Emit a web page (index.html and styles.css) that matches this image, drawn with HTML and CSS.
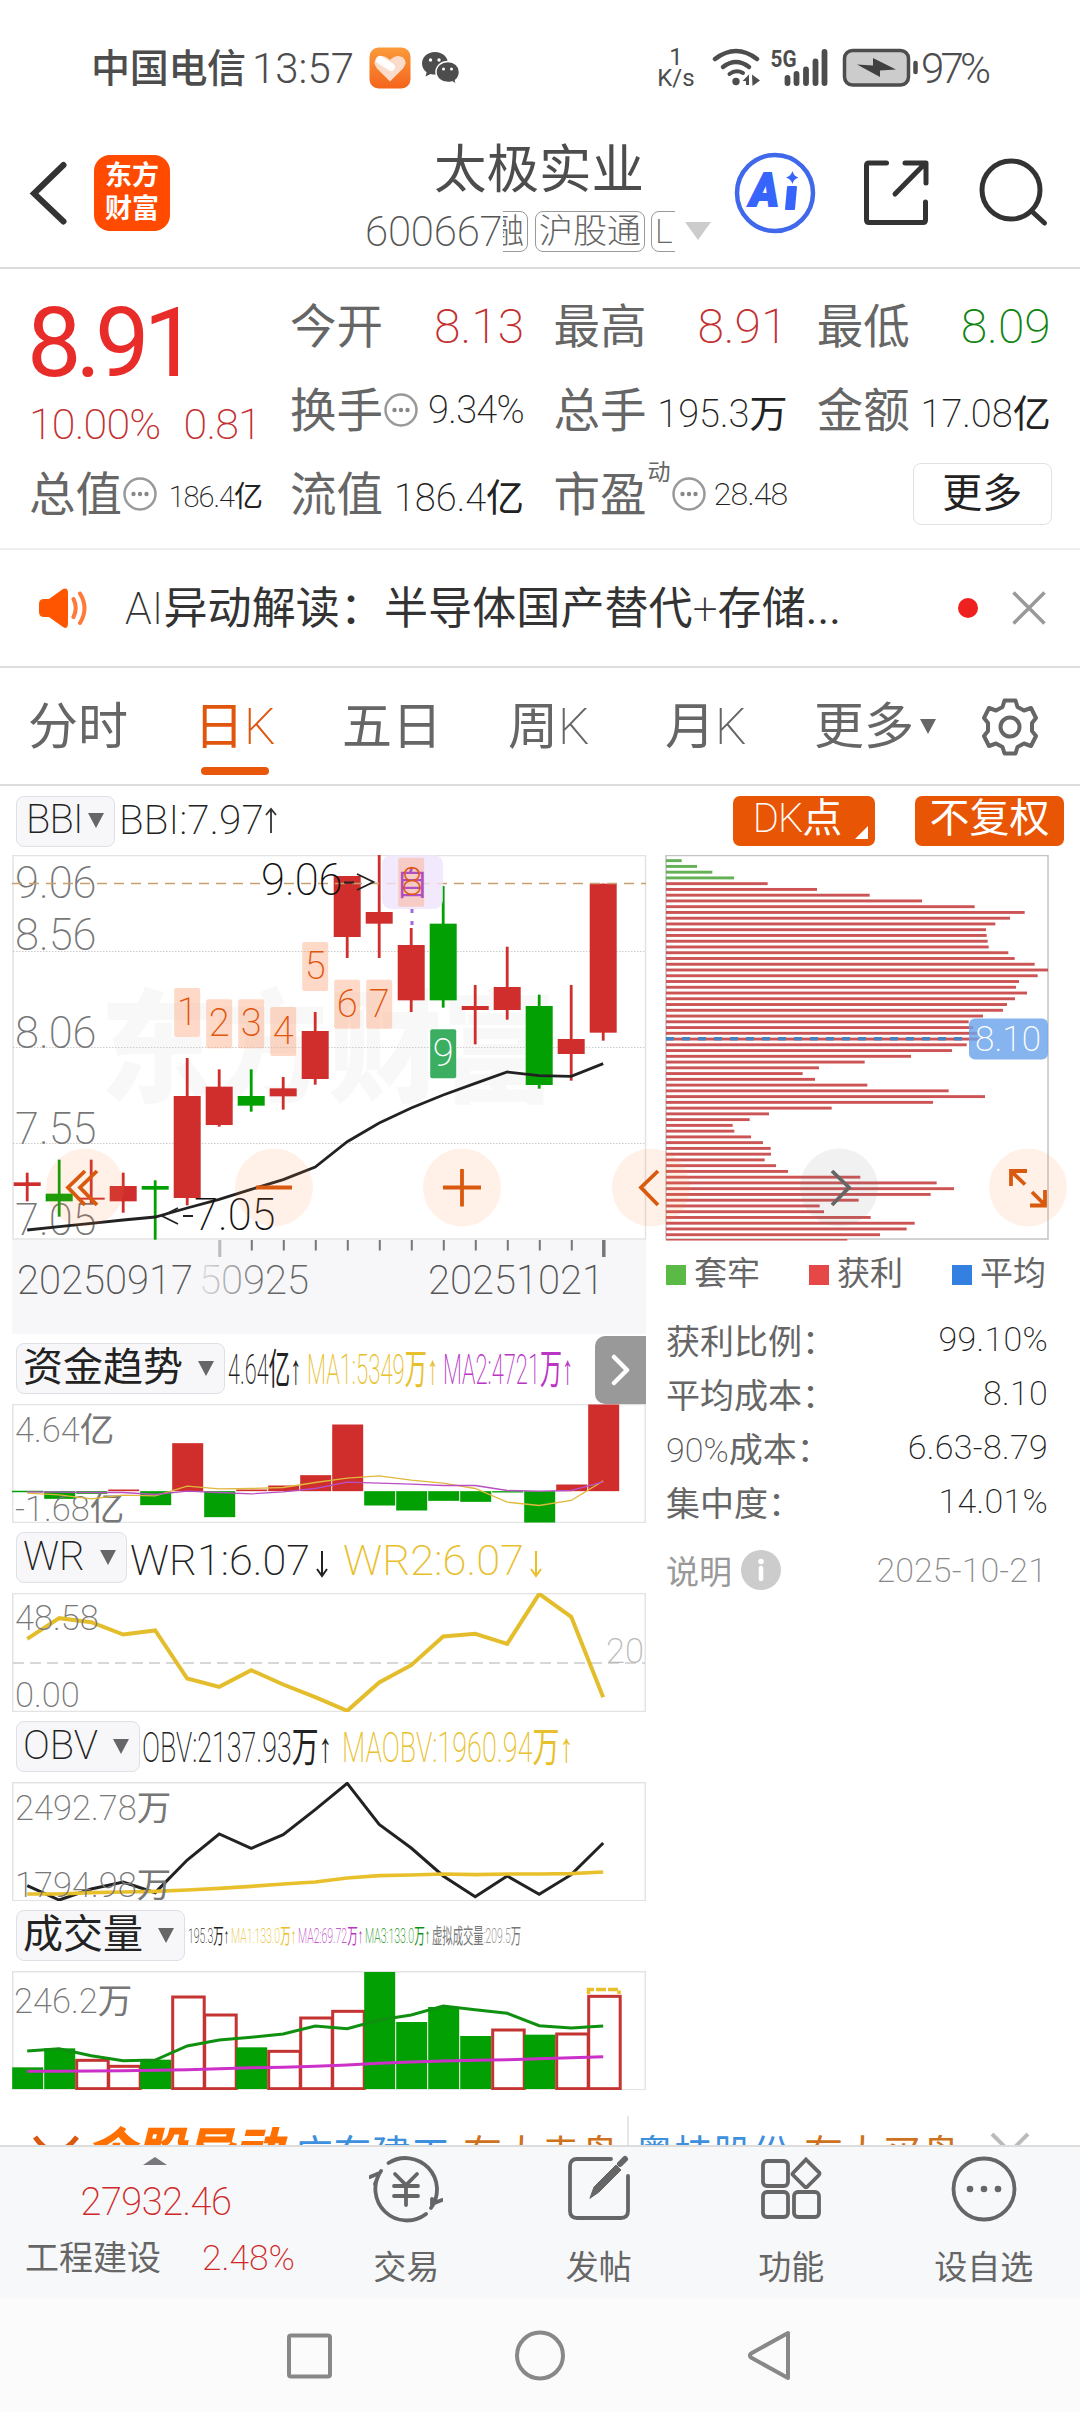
FILE: index.html
```html
<!DOCTYPE html>
<html lang="zh-CN">
<head>
<meta charset="utf-8">
<title>太极实业 600667</title>
<link rel="stylesheet" href="styles.css">
</head>
<body>
<div class="phone">

  <div class="status">
    <span class="carrier">中国电信</span><span class="clock">13:57</span>
    <svg class="heart" width="42" height="42" viewBox="0 0 42 42"><defs><linearGradient id="hg" x1="0" y1="0" x2="0" y2="1"><stop offset="0" stop-color="#fb9a3b"/><stop offset="1" stop-color="#f4641c"/></linearGradient></defs><rect x=".5" y=".5" width="41" height="41" rx="9" fill="url(#hg)"/><path d="M21 34.500L8 21.500Q3 15 8 10.500Q14 6.500 21 13Q28 6.500 34 10.500Q39 15 34 21.500Z" fill="#fbdccb"/><path d="M11 13L22 20" stroke="#fff" stroke-width="8" stroke-linecap="round"/></svg>
    <svg class="wechat" width="40" height="34" viewBox="0 0 40 34" fill="#4d4d4d"><path d="M14 1C6.500 1 1 6 1 12.500c0 3.700 1.800 6.600 4.600 8.700L4.500 25.500l5-2.500c1.500.4 3 .6 4.500.6 7.500 0 13-5 13-11.200S21.500 1 14 1z"/><path d="M27 10.500c-6.800 0-12 4.600-12 10.500s5.200 10.500 12 10.500c1.400 0 2.800-.2 4-.6l4.500 2.400-1-4c2.600-2 4-4.800 4-8.300 0-5.900-5-10.500-11.500-10.500z" stroke="#fff" stroke-width="1.500"/><g fill="#fff"><circle cx="9.500" cy="9" r="1.700"/><circle cx="18" cy="9" r="1.700"/><circle cx="22.500" cy="18" r="1.500"/><circle cx="30.500" cy="18" r="1.500"/></g></svg>
    <span class="rate"><b>1</b><b>K/s</b></span>
    <svg class="signal" width="206" height="44" viewBox="712 46 206 44">
      <g fill="none" stroke="#4d4d4d" stroke-linecap="round"><path d="M715 59Q736 43 757 59" stroke-width="4.500"/><path d="M723 67Q736 57 749 67" stroke-width="4.500"/><path d="M729.500 74Q736 69 743 73" stroke-width="4"/></g>
      <circle cx="736" cy="81.500" r="3.700" fill="#4d4d4d"/><path d="M742.500 81L749 74.500V85H746V81zM752 74.500L760 80.500L752.500 86z" fill="#4d4d4d"/>
      <text x="770.500" y="67" font-size="24.500" font-weight="700" textLength="26" lengthAdjust="spacingAndGlyphs" fill="#4d4d4d">5G</text>
      <g stroke="#4d4d4d" stroke-width="5.800" stroke-linecap="round"><path d="M787.500 78V83M796.500 74V83M806 69.500V83M815.500 61.500V83M824.500 52V83"/></g>
      <rect x="844.500" y="50.500" width="64" height="34.500" rx="8" fill="#ccc" stroke="#4d4d4d" stroke-width="3.500"/><path d="M857 64.500L873 65.500V58L896 69.500L880 70.500V77Z" fill="#404040"/><path d="M915.500 63V72" stroke="#4d4d4d" stroke-width="4.500" stroke-linecap="round"/>
    </svg>
    <span class="pct">97%</span>
  </div>

  <header class="head">
    <svg class="back" width="40" height="66" viewBox="28 160 40 66"><path d="M63.500 165L34 193.500L63.500 221.500" fill="none" stroke="#333" stroke-width="6" stroke-linecap="round"/></svg>
    <div class="logo"><span>东方</span><span>财富</span></div>
    <div class="title">
      <h1>太极实业</h1>
      <div class="sub"><span class="code">600667</span><span class="tags"><i class="cut">融</i><i>沪股通</i><i class="last">L1</i></span><svg class="drop" width="26" height="18" viewBox="0 0 26 18"><path d="M0 0H26L13 18Z" fill="#ccc"/></svg></div>
    </div>
    <svg class="actions" width="330" height="90" viewBox="730 148 330 90" fill="none">
      <circle cx="775" cy="193" r="38" stroke="#3f68ea" stroke-width="4.500"/>
      <text x="750" y="206" font-size="46" font-weight="900" font-style="italic" fill="#3765fc" stroke="#3765fc" stroke-width="2" textLength="29" lengthAdjust="spacingAndGlyphs">A</text>
      <path d="M788 187H796L794 209H786Z" fill="#3765fc" stroke="#3765fc" stroke-width="2" stroke-linejoin="round"/><path d="M792.500 171Q793.500 176 798.500 177.500Q793.500 179 792.500 184Q791 179 786 177.500Q791 176 792.500 171Z" fill="#3765fc"/>
      <g stroke="#333" stroke-width="5" stroke-linecap="round" stroke-linejoin="round"><path d="M886.500 163H869Q866.500 163 866.500 165.500V220Q866.500 222.500 869 222.500H923Q925.500 222.500 925.500 220V202M905 163H926V183M925 163.500L895 194"/><circle cx="1011" cy="190" r="29"/><path d="M1031.500 211L1044.500 223"/></g>
    </svg>
  </header>

  <section class="quote">
    <div class="price">
      <strong>8.91</strong>
      <div class="chg"><span>10.00%</span><span>0.81</span></div>
      <div class="cell"><label>总值</label><svg class="dots" viewBox="0 0 34 34"><use href="#dots"/></svg><em class="xs">186.4<u>亿</u></em></div>
    </div>
    <div class="grid">
      <div class="cell"><label>今开</label><em class="big red">8.13</em></div>
      <div class="cell"><label>最高</label><em class="big red">8.91</em></div>
      <div class="cell"><label>最低</label><em class="big green">8.09</em></div>
      <div class="cell"><label>换手</label><svg class="dots" viewBox="0 0 34 34"><use href="#dots"/></svg><em class="pc">9.34%</em></div>
      <div class="cell"><label>总手</label><em>195.3<u>万</u></em></div>
      <div class="cell"><label>金额</label><em>17.08<u>亿</u></em></div>
      <div class="cell"><label>流值</label><em>186.4<u>亿</u></em></div>
      <div class="cell"><label>市盈</label><sup>动</sup><svg class="dots" viewBox="0 0 34 34"><use href="#dots"/></svg><em class="sm">28.48</em></div>
      <div class="cell"><button class="more">更多</button></div>
    </div>
    <svg width="0" height="0" class="defs"><g id="dots"><circle cx="17" cy="17" r="15.500" fill="none" stroke="#999" stroke-width="2.500"/><g fill="#888"><circle cx="10.500" cy="17" r="2.200"/><circle cx="17" cy="17" r="2.200"/><circle cx="23.500" cy="17" r="2.200"/></g></g></svg>
  </section>

  <section class="news">
    <svg width="50" height="42" viewBox="38 586 50 42"><path d="M39 603Q39 598 44 598H49L63 588Q68 586 68 592V622Q68 629 63 626L49 616H44Q39 616 39 611Z" fill="#ff5500"/><path d="M73.500 598Q78 607 73.500 616M80 592.500Q89 607 80 622" fill="none" stroke="#ff7a38" stroke-width="4" stroke-linecap="round"/></svg>
    <span class="text">AI<u>异动解读：半导体国产替代</u>+<u>存储...</u></span>
    <i class="dot"></i>
    <svg width="34" height="34" viewBox="0 0 34 34"><path d="M1.500 1.500L32.500 32.500M32.500 1.500L1.500 32.500" stroke="#999" stroke-width="3.500"/></svg>
  </section>

  <nav class="tabs">
    <span><u>分时</u></span><span class="on"><u>日</u>K</span><span><u>五日</u></span><span><u>周</u>K</span><span><u>月</u>K</span><span class="tri"><u>更多</u></span>
    <svg width="58" height="58" viewBox="-29 -29 58 58" fill="none" stroke="#666" stroke-width="4" stroke-linejoin="round"><path d="M-5.500 -26.500H5.500L7.500 -20L14 -16.500L21 -19L26 -9L22 -4V4L26 9L21 19L14 16.500L7.500 20L5.500 26.500H-5.500L-7.500 20L-14 16.500L-21 19L-26 9L-22 4V-4L-26 -9L-21 -19L-14 -16.500L-7.500 -20Z"/><circle r="9.500"/></svg>
  </nav>

  <div class="indrow">
    <button class="pill bbi">BBI</button><span class="bbival">BBI:7.97<svg width="14" height="26" viewBox="0 0 14 26"><path d="M7 26V2M2 8L7 2L12 8" fill="none" stroke="#333" stroke-width="1.800"/></svg></span>
    <button class="tag dk">DK<u>点</u></button><button class="tag fq"><u>不复权</u></button>
  </div>

  <main class="charts">
    <div class="left">
      <svg class="kline" width="640" height="479" viewBox="12 15 640 479" id="kline">
        <rect x="12" y="400" width="634" height="95" fill="#f7f7fa"/>
        <text class="mark" x="100" y="252" textLength="456" lengthAdjust="spacingAndGlyphs">东方财富</text>
        <rect x="13" y="15.500" width="632.500" height="383.500" fill="none" stroke="#e3e3e3" stroke-width="1.500"/>
        <path d="M13 111.500H645M13 207.500H645M13 303.500H645" stroke="#ccc" stroke-dasharray="1.500 1.500"/>
        <g class="axis" font-size="43.500"><text x="15" y="57.500">9.06</text><text x="15" y="110">8.56</text><text x="15" y="207.500">8.06</text><text x="15" y="303.500">7.55</text><text x="15" y="395">7.05</text></g>
        <g id="candles"></g>
        <path d="M12 43.500H646" stroke="#c8a070" stroke-width="1.300" stroke-dasharray="10 7"/>
        <rect x="382" y="15" width="61" height="54" rx="9" fill="#f0e4fd" opacity=".8"/>
        <path d="M412 69V88" stroke="#a268e0" stroke-width="3" stroke-dasharray="4 8"/>
        <g id="tags"></g>
        <text x="395.500" y="54.500" font-size="33" font-weight="400" fill="#b050c0">自</text>
        <text x="412" y="54.500" font-size="38" text-anchor="middle" fill="#e0560c">8</text>
        <g class="ext" font-size="43.500"><text x="261" y="55">9.06</text><text x="194" y="389.500">7.05</text></g>
        <path d="M344 42.500H354M357 34L373.500 42L357 50M193 376H183M178 368L162 376L178 384" fill="none" stroke="#222" stroke-width="1.800"/>
        <g stroke="#777" stroke-width="2"><path d="M251.800 400V410.500M283.800 400V410.500M315.800 400V410.500M347.800 400V410.500M379.800 400V410.500M411.800 400V410.500M443.800 400V410.500M475.800 400V410.500M507.800 400V410.500M539.800 400V410.500M571.800 400V410.500"/><path d="M219.800 400V417" stroke="#bbb" stroke-width="3"/><path d="M603.800 400V417" stroke="#777" stroke-width="3.500"/></g>
        <defs><linearGradient id="fade" gradientUnits="userSpaceOnUse" x1="195" y1="0" x2="265" y2="0"><stop offset="0" stop-color="#666" stop-opacity=".1"/><stop offset="1" stop-color="#666"/></linearGradient></defs>
        <g class="dates" font-size="40"><text x="17" y="453.500">20250917</text><text x="199" y="453.500" fill="url(#fade)">50925</text><text x="428" y="453.500">20251021</text></g>
      </svg>

      <div class="subhead">
        <button class="pill" style="width:209px"><u>资金趋势</u></button>
        <svg width="350" height="60" viewBox="228 0 350 60" font-size="42"><text x="228" y="45" textLength="73" lengthAdjust="spacingAndGlyphs" fill="#222">4.64<tspan>亿</tspan>↑</text><text x="307" y="45" textLength="131" lengthAdjust="spacingAndGlyphs" fill="#e8c02c">MA1:5349<tspan>万</tspan>↑</text><text x="443" y="45" textLength="130" lengthAdjust="spacingAndGlyphs" fill="#b935c4">MA2:4721<tspan>万</tspan>↑</text></svg>
        <span class="next"><svg width="20" height="32" viewBox="0 0 20 32"><path d="M3 3L16 16L3 29" fill="none" stroke="#fff" stroke-width="4.500" stroke-linecap="round" stroke-linejoin="round"/></svg></span>
      </div>
      <svg class="panel" viewBox="12 73.500 634 119.500" id="fund"></svg>

      <div class="subhead">
        <button class="pill" style="width:111px">WR</button>
        <svg width="420" height="60" viewBox="130 0 420 60" font-size="43"><text x="130" y="46.500" textLength="180" lengthAdjust="spacingAndGlyphs" fill="#222">WR1:6.07</text><text x="343" y="46.500" textLength="181" lengthAdjust="spacingAndGlyphs" fill="#e8c02c">WR2:6.07</text><g fill="none" stroke-width="2"><path d="M322 23V48M317 41L322 48L327 41" stroke="#222"/><path d="M536 23V48M531 41L536 48L541 41" stroke="#e8c02c"/></g></svg>
      </div>
      <svg class="panel" viewBox="12 262.500 634 119.500" id="wr"></svg>

      <div class="subhead">
        <button class="pill" style="width:124px">OBV</button>
        <svg width="440" height="60" viewBox="143 0 440 60" font-size="42"><text x="142" y="45" textLength="190" lengthAdjust="spacingAndGlyphs" fill="#222">OBV:2137.93<tspan>万</tspan>↑</text><text x="342" y="45" textLength="231" lengthAdjust="spacingAndGlyphs" fill="#e8c02c">MAOBV:1960.94<tspan>万</tspan>↑</text></svg>
      </div>
      <svg class="panel" viewBox="12 71 634 119.500" id="obv"></svg>

      <div class="subhead">
        <button class="pill" style="width:169px"><u>成交量</u></button>
        <svg width="340" height="60" viewBox="189 0 340 60" font-size="21"><text x="189" y="36.500" textLength="41" lengthAdjust="spacingAndGlyphs" fill="#222">195.3<tspan>万</tspan>↑</text><text x="232" y="36.500" textLength="65" lengthAdjust="spacingAndGlyphs" fill="#e8c02c">MA1:133.0<tspan>万</tspan>↑</text><text x="299" y="36.500" textLength="65" lengthAdjust="spacingAndGlyphs" fill="#b935c4">MA2:69.72<tspan>万</tspan>↑</text><text x="366" y="36.500" textLength="65" lengthAdjust="spacingAndGlyphs" fill="#109010">MA3:133.0<tspan>万</tspan>↑</text><text x="433" y="36.500" textLength="89" lengthAdjust="spacingAndGlyphs" fill="#777"><tspan>虚拟成交量</tspan>:209.5<tspan>万</tspan></text></svg>
      </div>
      <svg class="panel" viewBox="12 260 634 119.500" id="vol"></svg>
    </div>

    <div class="right">
      <svg width="392" height="386" viewBox="25 15 392 386"><rect x="26" y="15.500" width="382" height="383.500" fill="none" stroke="#c4c4c4" stroke-width="1.500"/><g id="chips"></g><path d="M26 198.800H330" stroke="#4a80c4" stroke-width="3.500" stroke-dasharray="8 8"/><rect x="329" y="178.500" width="79" height="41" rx="6" fill="#6aa3ec" opacity=".82"/><text x="335" y="211" font-size="35" fill="#fff" textLength="66">8.10</text></svg>
      <div class="legend"><span><i class="g"></i>套牢</span><span><i class="r"></i>获利</span><span><i class="b"></i>平均</span></div>
      <dl>
        <div><dt>获利比例：</dt><dd>99.10%</dd></div>
        <div><dt>平均成本：</dt><dd>8.10</dd></div>
        <div><dt><s>90%</s>成本：</dt><dd>6.63-8.79</dd></div>
        <div><dt>集中度：</dt><dd>14.01%</dd></div>
      </dl>
      <div class="note"><u>说明</u><svg width="40" height="40" viewBox="0 0 40 40"><circle cx="20" cy="20" r="20" fill="#ccc"/><circle cx="20" cy="11.500" r="2.800" fill="#fff"/><path d="M20 18V29" stroke="#fff" stroke-width="4.500" stroke-linecap="round"/></svg><time>2025-10-21</time></div>
    </div>

    <svg class="floats" width="1080" height="80" viewBox="0 1148 1080 80" fill="none">
      <g fill="#fb8040" fill-opacity=".12"><circle cx="85" cy="1187.500" r="39"/><circle cx="274" cy="1187.500" r="39"/><circle cx="462" cy="1187.500" r="39"/><circle cx="651" cy="1187.500" r="39"/><circle cx="1028" cy="1187.500" r="39"/><circle cx="839" cy="1187.500" r="39" fill="#777" fill-opacity=".1"/></g>
      <g stroke="#d9590f" stroke-width="3.800"><path d="M85 1171L68 1187.500L85 1205M97 1171L80 1187.500L97 1205M256 1187.500H292M443 1187.500H481M462 1169V1206.500M658 1171L641 1187.500L658 1205"/><path d="M1011 1186V1171H1027M1011.500 1171.500L1025 1184.500M1030 1205.500H1045V1190M1044.500 1204.500L1032 1192"/><path d="M832 1171L849 1187.500L832 1205" stroke="#666"/></g>
    </svg>
  </main>

  <div class="ticker">
    <svg width="46" height="20" viewBox="0 0 46 20"><path d="M2 2Q22 30 44 2" fill="none" stroke="#d9590f" stroke-width="5"/></svg>
    <b>个股异动</b><span class="bl">广东建工</span><span class="or">有大卖盘</span><i></i><span class="bl">粤桂股份</span><span class="or">有大买盘</span>
    <svg class="x" width="40" height="40" viewBox="0 0 40 40"><path d="M2 2L38 38M38 2L2 38" stroke="#bbb" stroke-width="4"/></svg>
  </div>

  <footer class="bar">
    <div class="index">
      <svg width="24" height="8" viewBox="0 0 24 8"><path d="M0 8L12 0L24 8Z" fill="#77777c"/></svg>
      <b>27932.46</b>
      <p><u>工程建设</u><em>2.48%</em></p>
    </div>
    <div class="item"><svg viewBox="-37 -34 74 68"><path d="M-17.500 -26A31.500 31.500 0 0 1 25 19M26 10L26 15L36 11M20 25A31.500 31.500 0 0 1 -25 -18M-36 -12L-26.500 -16L-31 -5" /><path d="M-11 -15L0 -4L11 -15M0 -4V16M-12 -3H12M-12 7H12"/></svg>交易</div>
    <div class="item"><svg viewBox="-37 -34 74 68"><path d="M12 -30H-22Q-29 -30 -29 -23V22Q-29 29 -22 29H22Q29 29 29 22V-13"/><path d="M-9 9L-5 -2L17 -24L22 -19L0 3Z" fill="#666" stroke-width="1"/><path d="M21 -25L26 -30" stroke-width="6"/></svg>发帖</div>
    <div class="item"><svg viewBox="-37 -34 74 68"><rect x="-28" y="-28" width="25" height="25" rx="4"/><rect x="-28" y="3" width="25" height="25" rx="4"/><rect x="3" y="3" width="25" height="25" rx="4"/><path d="M15 -29.500L28.500 -16Q29 -15 28 -14L16 -2Q15 -1.500 14 -2L2 -14Q1 -15 2 -16Z"/></svg>功能</div>
    <div class="item"><svg viewBox="-37 -34 74 68"><circle r="30.500"/><g fill="#666" stroke="none"><circle cx="-14" r="3.300"/><circle r="3.300"/><circle cx="14" r="3.300"/></g></svg>设自选</div>
  </footer>

  <div class="sysnav">
    <svg width="520" height="60" viewBox="280 2325 520 60" fill="none" stroke="#888" stroke-width="4"><rect x="289" y="2335.500" width="41" height="41" rx="2"/><circle cx="540" cy="2355.500" r="23"/><path d="M788 2333V2378L751 2357.500Q749 2355.500 751 2353.500Z" stroke-linejoin="round"/></svg>
  </div>
</div>
<script src="charts.js"></script>
</body>
</html>
```

FILE: styles.css
```css
* { box-sizing: border-box; }
body { margin: 0; background: #fff; font-family: Roboto, "Noto Sans CJK SC", sans-serif; font-weight: 200; color: #333; }
button { font: inherit; color: inherit; padding: 0; margin: 0; border: 0; background: none; }
i, em { font-style: normal; }
/* Chinese runs are set heavier than the figures beside them */
u, svg tspan { text-decoration: none; font-weight: 400; }
s { text-decoration: none; font-weight: 200; }
svg { display: block; flex: none; }
svg text { white-space: pre; font-family: Roboto, "Liberation Sans", "Noto Sans CJK SC", sans-serif; }
.phone { width: 1080px; height: 2412px; overflow: hidden; display: flex; flex-direction: column; }
.phone > * { flex: none; }

.status { height: 110px; display: flex; align-items: center; padding: 25px 0 0 91px; line-height: 48px; color: #4d4d4d; font-weight: 300; }
.carrier { font-size: 39px; width: 161px; letter-spacing: -.3px; font-weight: 500; padding-top: 2px; white-space: nowrap; }
.clock { font-size: 42px; width: 117px; padding-top: 2px; }
.wechat { margin-left: 10px; }
.rate { width: 44px; margin-left: 193px; display: flex; flex-direction: column; align-items: center; font-size: 24px; line-height: 21px; }
.rate b { font-weight: 400; }
.signal { margin-left: 14px; }
.pct { font-size: 42px; margin-left: 3px; letter-spacing: -3.800px; padding-top: 2px; }

.head { height: 159px; border-bottom: 2px solid #ddd; display: flex; padding-left: 28px; }
.back { margin-top: 50px; }
.logo { width: 76px; height: 76px; margin: 45px 0 0 26px; border-radius: 16px; background: #ff4a00; color: #fff; display: flex; flex-direction: column; align-items: center; justify-content: center; font-size: 27px; line-height: 33px; font-weight: 700; }
.title { width: 348px; margin-left: 195px; display: flex; flex-direction: column; align-items: center; }
.title h1 { margin: 29px 0 0; font-size: 52.500px; line-height: 62px; font-weight: 400; color: #4d4d4d; }
.sub { display: flex; align-items: center; height: 42px; margin: 9px 0 0 -2px; }
.code { font-size: 42px; color: #555; width: 138px; letter-spacing: -.2px; }
.tags { display: flex; gap: 7px; width: 172px; overflow: hidden; font-size: 34px; color: #666; line-height: 38px; font-weight: 300; }
.tags i { flex: none; height: 41px; border: 1.500px solid #999; border-radius: 8px; padding: 0 3px; }
.tags .cut { margin-left: -17px; }
.tags .last { font-weight: 200; margin-left: -1px; }
.drop { margin-left: 10px; }
.actions { margin: 38px 0 0 17px; }

.quote { height: 281px; border-bottom: 2px solid #eee; display: flex; padding-left: 29px; position: relative; }
.defs { position: absolute; }
.price { width: 263px; color: #c33030; }
.price strong { display: block; font-size: 97px; line-height: 100px; margin: 24px 0 0 -2px; height: 104px; font-weight: 400; color: #e82c2a; letter-spacing: -6px; }
.chg { display: flex; justify-content: space-between; font-size: 43px; width: 232px; height: 56px; line-height: 54px; letter-spacing: -.8px; }
.price .cell { height: 84px; width: 233px; }
.grid { display: grid; grid-template-columns: repeat(3, 263.300px); grid-auto-rows: 84px; padding-top: 16px; }
.cell { display: flex; align-items: center; width: 234px; color: #222; }
.cell label { font-size: 46.500px; color: #666; line-height: 60px; font-weight: 400; flex: none; margin-top: -1px; }
.cell em { margin-left: auto; font-size: 38px; letter-spacing: 0; white-space: nowrap; margin-top: -2px; }
.cell .pc { letter-spacing: -.7px; }
.cell .big { font-size: 48px; margin-top: -1px; }
.cell .sm { font-size: 32px; letter-spacing: -.8px; }
.cell .xs { font-size: 29px; letter-spacing: -1px; }
.cell sup { font-size: 23px; color: #666; align-self: flex-start; line-height: 28px; margin: 6px 1px 0; font-weight: 400; }
.dots { width: 34px; height: 34px; margin: -3px 0 0 1px; }
.cell .red { color: #c33030; }
.cell .green { color: #108410; }
.more { width: 139px; height: 62px; border: 1.500px solid #e2e2e2; border-radius: 8px; margin: -3px -1px 0 auto; font-size: 40px; line-height: 56px; font-weight: 400; }

.news { height: 118px; border-bottom: 2px solid #ddd; display: flex; align-items: center; padding: 0 34px 0 38px; }
.news .text { margin: -7px 0 0 37px; font-size: 44px; width: 835px; letter-spacing: .1px; white-space: nowrap; }
.dot { width: 20px; height: 20px; border-radius: 50%; background: #ee2020; margin-right: 34px; }

.tabs { height: 118px; border-bottom: 2px solid #ddd; display: grid; grid-template-columns: 172px 142px 166px 157px 149px 167px 58px; padding-left: 28px; align-items: center; font-size: 50px; color: #666; white-space: nowrap; line-height: 60px; padding-top: 1px; }
.tabs svg { margin-top: 0; }
.tabs .on { color: #e0560c; width: 70px; height: 76px; margin: 16px 0 0 -6px; position: relative; }
.tabs .on::after { content: ""; position: absolute; left: 7px; top: 70px; width: 68px; height: 8px; border-radius: 4px; background: #e8570a; }
.tri::after { content: ""; display: inline-block; border: 8.500px solid transparent; border-top: 15px solid #666; border-bottom: 0; margin: 0 0 8px 6px; vertical-align: middle; }

.indrow { height: 69px; display: flex; align-items: center; padding: 0 16px; }
.pill { height: 51px; background: #f7f7fa; border: 1.500px solid #dfe0e6; border-radius: 8px; font-size: 40px; color: #222; display: flex; align-items: center; justify-content: space-between; padding: 0 10px 1px 6px; flex: none; line-height: 44px; }
.pill::after { content: ""; border: 8.500px solid transparent; border-top: 15px solid #666; border-bottom: 0; }
.bbi { width: 99px; padding: 0 10px 2px 9px; letter-spacing: -.8px; margin-top: 1px; }
.bbival { font-size: 40.500px; margin: -1px 0 0 4px; display: flex; align-items: center; letter-spacing: .2px; color: #222; width: 614px; }
.tag { height: 50px; border-radius: 7px; background: #e85505; color: #fff; font-size: 40px; line-height: 44px; flex: none; position: relative; padding-bottom: 3px; }
.dk { width: 142px; padding-right: 14px; letter-spacing: -1px; }
.dk::after { content: ""; position: absolute; right: 7px; bottom: 7px; border-left: 13px solid transparent; border-bottom: 13px solid #fff; }
.fq { width: 149px; margin-left: 40px; }

.charts { display: flex; height: 1235px; position: relative; }
.left { width: 640px; margin-left: 12px; }
.right { width: 392px; margin-left: 13px; }
.floats { position: absolute; left: 0; top: 293px; }
.mark { font-size: 122px; font-weight: 900; fill: #f8f8f8; }
.axis { fill: #777; }
.ext { fill: #111; }
.dates { fill: #555; }
.subhead { height: 69.500px; width: 634px; display: flex; align-items: center; padding-left: 4px; position: relative; }
.subhead > svg { margin: 0 0 0 3px; }
.next { position: absolute; right: 0; top: 2px; width: 51px; height: 68px; background: #999; border-radius: 10px 0 0 10px; display: flex; align-items: center; justify-content: center; }
.panel { width: 634px; height: 119.500px; }

.legend { display: flex; gap: 49px; height: 60px; margin: 3px 0 0 1px; align-items: center; color: #666; font-size: 33px; font-weight: 400; line-height: 40px; }
.legend span { display: flex; align-items: center; gap: 8px; margin-top: -1px; }
.legend i { width: 20px; height: 20px; margin-top: 3px; }
.g { background: #5bb946; }
.r { background: #e64848; }
.b { background: #3480e0; }
dl { margin: 8px 0 0 1px; width: 382px; }
dl div { display: flex; justify-content: space-between; height: 54px; align-items: center; font-size: 34px; }
dt { color: #666; font-weight: 400; }
dt s { color: #555; }
dd { margin: 0; color: #222; letter-spacing: .3px; }
.note { display: flex; align-items: center; margin: 20px 0 0 1px; width: 381px; font-size: 33px; color: #999; height: 44px; }
.note svg { margin-left: 9px; }
.note time { margin-left: auto; color: #888; font-size: 34px; letter-spacing: .1px; }

.ticker { height: 55px; display: flex; overflow: hidden; padding-left: 33px; font-size: 39px; line-height: 56px; white-space: nowrap; font-weight: 400; }
.ticker > svg { margin-top: 45px; }
.ticker b { font-weight: 900; font-style: italic; color: #ff7000; font-size: 49px; width: 208px; margin: 31px 0 0 7px; line-height: 62px; }
.ticker span { margin-top: 37px; width: 169px; }
.ticker i { width: 2px; height: 40px; background: #e6e6e6; margin: 26px 6px 0 -5px; }
.ticker .x { margin: 42px 0 0 17px; }
.bl { color: #3c90dd; }
.or { color: #cf7220; }

.bar { height: 153px; background: #f7f8fa; border-top: 2px solid #ddd; display: flex; color: #666; font-size: 33px; }
.index { width: 310px; display: flex; flex-direction: column; align-items: center; }
.index svg { margin-top: 10px; }
.index b { font-weight: 200; color: #d02828; font-size: 38px; line-height: 50px; margin: 12px 0 0 2px; letter-spacing: -.5px; }
.index p { margin: 6px 0 0 10px; display: flex; width: 270px; justify-content: space-between; align-items: center; line-height: 50px; font-size: 34px; }
.index em { color: #d02828; font-size: 35.500px; }
.item { width: 192.500px; display: flex; flex-direction: column; align-items: center; line-height: 48px; padding-top: 8px; gap: 21px; font-weight: 400; }
.item svg { width: 74px; height: 68px; fill: none; stroke: #666; stroke-width: 3.800; stroke-linecap: round; }
.sysnav { height: 114px; background: #fbfbfb; padding: 27px 0 0 280px; }
```

FILE: charts.js
```js
const RED = '#d02e2c', GREEN = '#02a002';
const cx = i => 27.2 + 32 * i;
const put = (id, html) => { document.getElementById(id).innerHTML += html; };
const rect = (x, y, w, h, fill, extra = '') => `<rect x="${x}" y="${y}" width="${w}" height="${h}" fill="${fill}" ${extra}/>`;
const line = (ys, color, w) => `<polyline fill="none" stroke="${color}" stroke-width="${w}" points="${ys.map((y, i) => cx(i) + ',' + y / 3).join(' ')}"/>`;
const frame = (y, h) => `<rect x="12.7" y="${y}" width="632.6" height="${h}" fill="none" stroke="#e3e3e3" stroke-width="1.5"/>`;
const text = (x, y, s, size, fill = '#777') => `<text x="${x}" y="${y}" font-size="${size}" fill="${fill}">${s.replace(/[万亿]/, '<tspan>$&</tspan>')}</text>`;

// candles: high, body top, body bottom, low, rising (thirds of a pixel)
const candles = [
  [998,1027,1038,1084,1],[959,1061,1084,1130,0],[959,1073,1079,1090,1],[998,1038,1084,1118,1],[1021,1038,1049,1199,0],
  [654,768,1074,1096,1],[688,740,855,860,1],[688,768,797,815,0],[711,745,769,809,1],[516,573,717,734,1],
  [108,108,291,354,1],[45,216,251,354,1],[264,315,481,516,1],[138,251,481,503,0],[435,498,510,613,1],
  [320,441,510,539,1],[464,498,735,746,0],[435,597,642,722,1],[131,131,578,602,1]];
put('candles', candles.map(([h, t, b, l, up], i) => {
  const c = up ? RED : GREEN;
  return rect(cx(i) - 1.4, h / 3, 2.8, (l - h) / 3, c) + rect(cx(i) - 13.5, t / 3, 27, (b - t) / 3, c);
}).join('') + line([1170,1160,1150,1140,1131,1104,1078,1048,1019,981,905,849,804,765,730,696,707,709,671], '#222', 2.8));

// nine-turn sequence marks; the eighth carries its own label in the page
put('tags', [[5,444],[6,478],[7,478],[8,501],[9,306],[10,419],[11,419],[12,53],[13,568]].map(([i, y], n) => {
  const last = n === 8;
  return rect(cx(i) - 13, y / 3, 26, 49, last ? '#3cae62' : '#fca57c', `rx="2" ${last ? '' : 'opacity=".42"'}`) +
    (n === 7 ? '' : `<text x="${cx(i)}" y="${y / 3 + 37}" font-size="38" text-anchor="middle" fill="${last ? '#fff' : '#e0560c'}">${n + 1}</text>`);
}).join(''));

// fund flow
const zero = 482, flow = [null,505,490,477,524,338,560,477,465,434,282,525,540,511,514,486,576,462,222];
put('fund', frame(74, 118) + `<path d="M12 161H43" stroke="${GREEN}" stroke-width="1.5"/>` + flow.map((v, i) => v === null ? '' :
  rect(cx(i) - 15, Math.min(v, zero) / 3, 31, Math.abs(v - zero) / 3, v < zero ? RED : GREEN)).join('') +
  text(15, 111, '4.64亿', 34.5) + text(15, 190, '-1.68亿', 34.5) +
  line([488,493,505,494,496,467,475,474,471,456,443,436,449,458,474,515,525,510,451], '#e0b83c', 1.3) +
  line([484,485,486,486,492,482,486,490,484,474,455,458,461,465,465,480,482,480,454], '#b94fc4', 1.3));

// Williams %R
put('wr', frame(263, 118) + '<path d="M13 332.5H645" stroke="#ccc" stroke-width="1.3" stroke-dasharray="11 6"/>' +
  line([925,863,875,912,900,1044,1069,1019,1062,1100,1141,1056,1004,918,910,940,790,859,1100], '#e4bd2c', 4) +
  text(15, 299.7, '48.58', 34.5) + text(15, 376.7, '0.00', 34.5) + text(606, 332.5, '20', 34.5, '#bbb'));

// on-balance volume
put('obv', frame(71.7, 118) +
  line([524,567,534,513,545,447,369,412,371,296,217,340,411,495,557,495,550,491,396], '#222', 3) +
  line([549,549,545,543,541,537,532,526,519,513,501,494,492,489,491,489,489,488,483], '#e8c02c', 3.6) +
  text(15, 109, '2492.78万', 34.5) + text(15, 186, '1794.98万', 34.5));

// volume: top edge, solid
const vol = [[1069,1],[1012,1],[1048,0],[1066,0],[1046,1],[858,0],[912,0],[1009,1],[1021,0],[921,0],[901,0],[783,1],[933,1],[888,1],[975,1],[957,0],[971,1],[969,0],[856,0]];
put('vol', frame(260.7, 118) + vol.map(([t, solid], i) => solid
  ? rect(cx(i) - 15, t / 3, 31, (1134 - t) / 3, GREEN)
  : rect(cx(i) - 14.5, t / 3, 31.5, (1133 - t) / 3, '#fff', 'stroke="#c43432" stroke-width="3"')).join('') +
  '<path d="M588.5 283V278.500H619V283" fill="none" stroke="#e8c02c" stroke-width="3.5" stroke-dasharray="10 2"/>' +
  line([1020,1013,1034,1049,1047,1005,987,979,969,945,953,927,912,885,896,907,944,951,945], '#109010', 3) +
  line([1081,1081,1080,1079,1078,1076,1073,1070,1069,1066,1062,1057,1053,1050,1048,1046,1043,1040,1037], '#cc30c8', 3) +
  text(14, 302, '246.2万', 34.5));

// chip distribution, top price first
const chips = [125,171,217,282,383,531,689,846,1004,1154,1110,1066,1038,1040,1043,1046,1105,1124,1184,1224,1193,1137,1128,1161,1125,1101,1089,1029,986,1000,1013,1025,980,936,813,674,537,488,525,682,926,1035,879,575,387,329,278,283,333,369,392,393,374,408,444,661,890,942,872,656,539,552,692,824,800,720,622];
put('chips', chips.map((e, i) => rect(26, 19.2 + 5.755 * i, e / 3 - 26, i === 66 ? 1.5 : 2.9, i < 4 ? '#64b054' : '#cc5454')).join(''));
```
